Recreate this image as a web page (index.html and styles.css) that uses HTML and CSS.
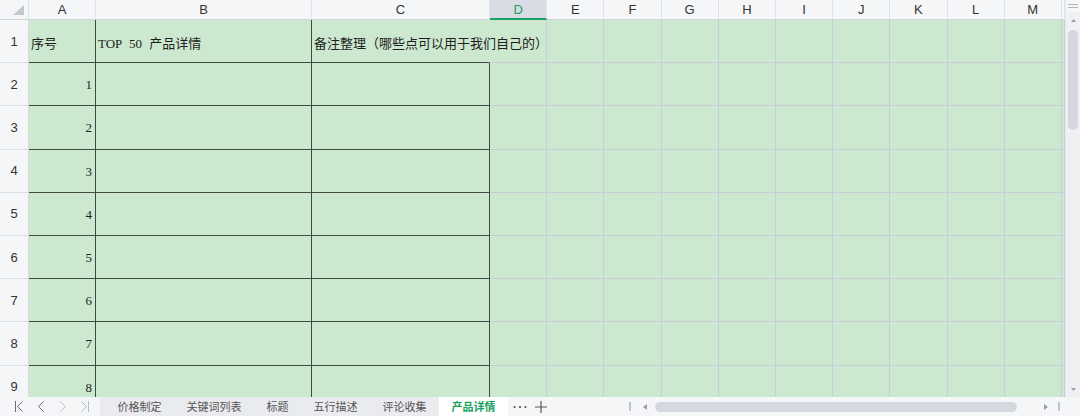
FILE: index.html
```html
<!DOCTYPE html>
<html lang="zh-CN">
<head>
  <meta charset="UTF-8">
  <title>产品详情</title>
  <link rel="stylesheet" href="styles.css">
</head>
<body>
  <div class="app">
    <div class="main">
      <div class="sheet" id="sheet"></div>
      <div class="vscroll">
        <div class="vs-top">
          <svg width="10" height="4" viewBox="0 0 10 4"><path d="M0 .5h10M0 3.5h10" stroke="#b4b7c0" stroke-width="1"/></svg>
        </div>
        <div class="vs-btn"><svg width="5" height="3" viewBox="0 0 5 3"><path d="M2.5 0L5 3H0z" fill="#9a9da6"/></svg></div>
        <div class="vs-track"><div class="vs-thumb"></div></div>
        <div class="vs-btn"><svg width="5" height="3" viewBox="0 0 5 3"><path d="M0 0h5L2.5 3z" fill="#9a9da6"/></svg></div>
      </div>
    </div>

    <div class="tabbar">
      <div class="nav">
        <svg width="8" height="11" viewBox="0 0 8 11"><path d="M.5 0v11M7.5 .5L2.5 5.5l5 5" fill="none" stroke="#6b6e75" stroke-width="1"/></svg>
        <svg width="8" height="11" viewBox="0 0 8 11"><path d="M6.5 .5L1.5 5.5l5 5" fill="none" stroke="#6b6e75" stroke-width="1"/></svg>
        <svg width="8" height="11" viewBox="0 0 8 11"><path d="M1.5 .5l5 5-5 5" fill="none" stroke="#b9bcc3" stroke-width="1"/></svg>
        <svg width="8" height="11" viewBox="0 0 8 11"><path d="M.5 .5l5 5-5 5M7.5 0v11" fill="none" stroke="#b9bcc3" stroke-width="1"/></svg>
      </div>
      <div class="tabs">
        <span class="tab">价格制定</span>
        <span class="tab">关键词列表</span>
        <span class="tab">标题</span>
        <span class="tab">五行描述</span>
        <span class="tab">评论收集</span>
        <span class="tab active">产品详情</span>
      </div>
      <div class="tab-tools">
        <svg width="14" height="4" viewBox="0 0 14 4"><circle cx="1.5" cy="2" r="1.1" fill="#555"/><circle cx="7" cy="2" r="1.1" fill="#555"/><circle cx="12.5" cy="2" r="1.1" fill="#555"/></svg>
        <svg width="12" height="12" viewBox="0 0 12 12"><path d="M6 0v12M0 6h12" stroke="#555" stroke-width="1.2"/></svg>
      </div>
      <div class="spacer"></div>
      <div class="hscroll">
        <span class="hs-sep"></span>
        <svg class="hs-left" width="4" height="6" viewBox="0 0 4 6"><path d="M4 0v6L0 3z" fill="#9a9da6"/></svg>
        <span class="hs-thumb"></span>
        <svg class="hs-right" width="4" height="6" viewBox="0 0 4 6"><path d="M0 0l4 3-4 3z" fill="#9a9da6"/></svg>
        <span class="hs-sep last"></span>
      </div>
    </div>
  </div>

  <script>
    const cols = ['A', 'B', 'C', 'D', 'E', 'F', 'G', 'H', 'I', 'J', 'K', 'L', 'M', 'N'];
    const data = {
      A1: '序号',
      B1: 'TOP 50 产品详情',
      C1: '备注整理（哪些点可以用于我们自己的）'
    };
    for (let i = 1; i <= 8; i++) data['A' + (i + 1)] = String(i);

    const sheet = document.getElementById('sheet');
    let html = '<div class="corner"><svg width="11" height="10" viewBox="0 0 11 10"><path d="M11 0v10H0z" fill="#c4c7cf"/></svg></div>';

    cols.forEach(c => {
      html += `<div class="colhead${c === 'D' ? ' sel' : ''}">${c === 'N' ? '' : c}</div>`;
    });

    for (let r = 1; r <= 9; r++) {
      html += `<div class="rowhead">${r}</div>`;
      cols.forEach(c => {
        const cls = ['cell'];
        if (c === 'A' || c === 'B' || (c === 'C' && r > 1)) cls.push('br');
        if ((c === 'A' || c === 'B' || c === 'C') && r < 9) cls.push('bb');
        if (c === 'C' && r === 1) cls.push('spill');
        if (c === 'B' && r === 1) cls.push('wide');
        if (c === 'A' && r > 1) cls.push('num');
        html += `<div class="${cls.join(' ')}">${data[c + r] || ''}</div>`;
      });
    }
    sheet.innerHTML = html;
  </script>
</body>
</html>
```

FILE: styles.css
```css
body {
  margin: 0;
  background: #f5f6f8;
  font-family: "Liberation Sans", "Noto Sans CJK SC", sans-serif;
}
.app {
  width: 1080px;
  height: 416px;
  overflow: hidden;
  display: flex;
  flex-direction: column;
}
.main {
  height: 397px;
  display: flex;
}
.sheet {
  flex: 1;
  overflow: hidden;
  display: grid;
  grid-template-columns: 29px 67px 216px 178px repeat(10, 57.2px) 1fr;
  grid-template-rows: 20px repeat(9, 43.2px);
  background: #cce8cf;
}
.sheet > div {
  box-sizing: border-box;
  min-width: 0;
  white-space: nowrap;
}
.corner {
  background: #f5f6f8;
  border-right: 1px solid #e0e2e9;
  border-bottom: 1px solid #d0d4df;
  display: flex;
  align-items: flex-end;
  justify-content: flex-end;
  padding: 0 4px 4px 0;
}
.colhead {
  background: #f5f6f8;
  border-right: 1px solid #e0e2e9;
  border-bottom: 1px solid #d0d4df;
  color: #333;
  font-size: 13px;
  display: flex;
  align-items: center;
  justify-content: center;
  overflow: hidden;
}
.colhead.sel {
  background: #d9dce4;
  color: #1aa260;
  border-bottom: 2px solid #1aa260;
}
.rowhead {
  background: #f5f6f8;
  border-right: 1px solid #d6d9e2;
  border-bottom: 1px solid #dde0e8;
  color: #333;
  font-size: 13px;
  display: flex;
  align-items: center;
  justify-content: center;
}
.cell {
  background: #cce8cf;
  border-right: 1px solid #c8ccda;
  border-bottom: 1px solid #c8ccda;
  font-family: "Liberation Serif", "Noto Sans CJK SC", serif;
  font-size: 13px;
  color: #1e1e1e;
  display: flex;
  align-items: center;
  padding: 2px 0 0 2px;
}
.cell.br {
  border-right-color: #3f4b3f;
}
.cell.bb {
  border-bottom-color: #3f4b3f;
}
.cell.num {
  justify-content: flex-end;
  padding-right: 3px;
}
.cell.wide {
  word-spacing: 4px;
}
.cell.spill {
  border-right-color: #cce8cf;
  overflow: visible;
  z-index: 1;
}

.vscroll {
  width: 14px;
  border-left: 1px solid #e8eaef;
  background: #eff0f4;
  display: flex;
  flex-direction: column;
  align-items: center;
}
.vs-top {
  height: 12px;
  width: 100%;
  background: #f5f6f8;
  display: flex;
  justify-content: center;
  padding-top: 4px;
  box-sizing: border-box;
}
.vs-btn {
  height: 16px;
  display: flex;
  align-items: center;
}
.vs-track {
  flex: 1;
  width: 100%;
  display: flex;
  justify-content: center;
}
.vs-thumb {
  width: 10px;
  height: 100px;
  margin-top: 2px;
  border-radius: 5px;
  background: #d5d7df;
}

.tabbar {
  height: 19px;
  display: flex;
  align-items: center;
  background: #f5f6f8;
  font-family: "Noto Sans CJK SC", sans-serif;
  font-size: 11px;
  color: #555;
}
.nav {
  width: 100px;
  display: flex;
  align-items: center;
  gap: 14px;
  padding-left: 15px;
  box-sizing: border-box;
}
.tabs {
  height: 100%;
  display: flex;
  background: #eaebef;
  padding-left: 5px;
}
.tab {
  padding: 0 12.5px;
  line-height: 19px;
}
.tab.active {
  background: #fff;
  color: #1aa260;
  font-weight: bold;
}
.tab-tools {
  display: flex;
  align-items: center;
  gap: 8px;
  padding-left: 5px;
}
.spacer {
  flex: 1;
}
.hscroll {
  width: 454px;
  height: 100%;
  display: flex;
  align-items: center;
}
.hs-sep {
  width: 2px;
  height: 9px;
  margin-left: 3px;
  background: #c3c5cc;
}
.hs-sep.last {
  margin-left: 10px;
}
.hs-left {
  margin-left: 12px;
}
.hs-thumb {
  width: 362px;
  height: 10px;
  margin-left: 8px;
  border-radius: 5px;
  background: #d6d8df;
}
.hs-right {
  margin-left: 27px;
}
```
